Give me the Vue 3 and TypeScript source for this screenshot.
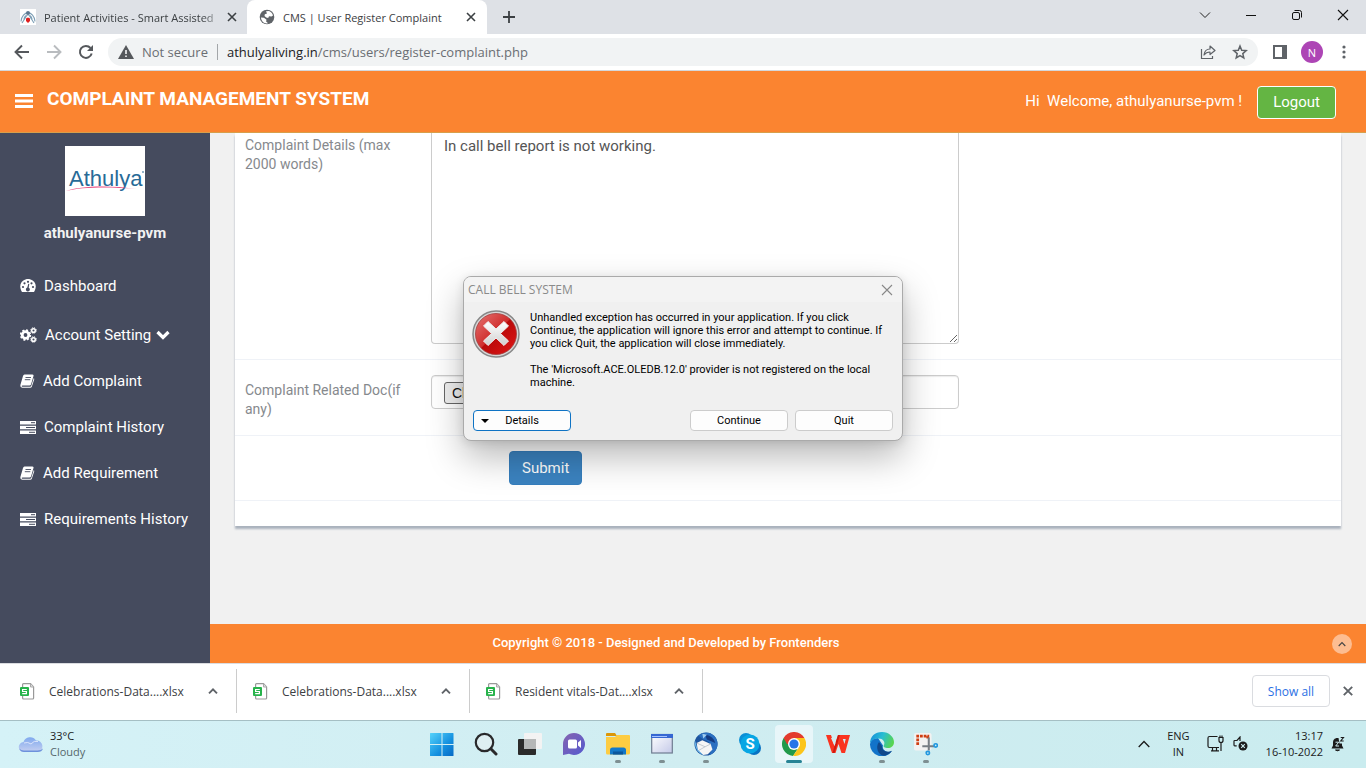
<script setup lang="ts">
import { ref } from 'vue'

type NavIcon = 'gauge' | 'cogs' | 'book' | 'tasks'
interface NavItem { label: string; icon: NavIcon; expandable?: boolean }

const navItems: NavItem[] = [
  { label: 'Dashboard', icon: 'gauge' },
  { label: 'Account Setting', icon: 'cogs', expandable: true },
  { label: 'Add Complaint', icon: 'book' },
  { label: 'Complaint History', icon: 'tasks' },
  { label: 'Add Requirement', icon: 'book' },
  { label: 'Requirements History', icon: 'tasks' },
]

const downloads: string[] = [
  'Celebrations-Data....xlsx',
  'Celebrations-Data....xlsx',
  'Resident vitals-Dat....xlsx',
]

const details = ref('In call bell report is not working.')
</script>

<template>
  <div class="screen">
    <header class="tabs">
      <div class="tab idle">
        <svg class="fav" width="16" height="16" viewBox="0 0 16 16" aria-hidden="true">
          <rect width="16" height="16" fill="#fff" />
          <path d="M1 12.500C2 1 14 1 15 12.500M3.800 12C4 4 12 4 12.200 12M2 14l4.500-7M14 14L9.500 7" fill="none" stroke="#7d9fb6" stroke-width="1.100" />
          <circle cx="8" cy="4" r="2" fill="#5c7890" />
          <path d="M6 9.500l2-1 2 1v2.500l-2 2-2-2z" fill="#e02020" />
        </svg>
        <span class="tab-text fade">Patient Activities - Smart Assisted</span>
        <button class="icon-btn" aria-label="Close tab"><svg width="10" height="10" viewBox="0 0 10 10"><path d="M1 1l8 8M9 1l-8 8" stroke="#3c4043" stroke-width="1.600" /></svg></button>
      </div>
      <div class="tab active">
        <svg class="fav" width="16" height="16" viewBox="0 0 16 16" aria-hidden="true">
          <circle cx="8" cy="8" r="7.300" fill="#5f6368" />
          <path d="M2 8.500l3 .2 2.500 2-.4 1.800 2 1.800c-4 .6-7-2-7.100-5.800zM7 2.200l3-.3c2 .8 3.500 2.300 4 4.500l-1.500 1-2.500-.2-.8 1.800-2-.6L5.500 7l.3-1.800L8 4.500z" fill="#fff" />
        </svg>
        <span class="tab-text">CMS | User Register Complaint</span>
        <button class="icon-btn" aria-label="Close tab"><svg width="10" height="10" viewBox="0 0 10 10"><path d="M1 1l8 8M9 1l-8 8" stroke="#3c4043" stroke-width="1.600" /></svg></button>
      </div>
      <button class="icon-btn new-tab" aria-label="New tab"><svg width="12" height="12" viewBox="0 0 12 12"><path d="M6 0v12M0 6h12" stroke="#3c4043" stroke-width="1.800" /></svg></button>
      <div class="win-controls">
        <button class="icon-btn" aria-label="Search tabs"><svg width="12" height="12" viewBox="0 0 12 12"><path d="M1 3.500l5 5 5-5" fill="none" stroke="#222" /></svg></button>
        <button class="icon-btn" aria-label="Minimize"><svg width="12" height="12" viewBox="0 0 12 12"><path d="M1 6.500h10" stroke="#111" /></svg></button>
        <button class="icon-btn" aria-label="Restore"><svg width="12" height="12" viewBox="0 0 12 12"><rect x="1.500" y="3.500" width="7" height="7" rx="1.500" fill="none" stroke="#111" /><path d="M3.500 1.500h5q2 0 2 2v5" fill="none" stroke="#111" /></svg></button>
        <button class="icon-btn" aria-label="Close"><svg width="12" height="12" viewBox="0 0 12 12"><path d="M1 1l10 10M11 1L1 11" stroke="#111" stroke-width="1.100" /></svg></button>
      </div>
    </header>

    <div class="toolbar">
      <button class="icon-btn tool" aria-label="Back"><svg width="16" height="16" viewBox="0 0 16 16"><path d="M15 8H2M8 1.500L1.500 8 8 14.500" fill="none" stroke="#55585c" stroke-width="1.900" /></svg></button>
      <button class="icon-btn tool" aria-label="Forward"><svg width="16" height="16" viewBox="0 0 16 16"><path d="M1 8h13M8 1.500L14.500 8 8 14.500" fill="none" stroke="#b9bcbf" stroke-width="1.900" /></svg></button>
      <button class="icon-btn tool" aria-label="Reload"><svg width="16" height="16" viewBox="0 0 16 16"><path d="M13.700 9.500A6 6 0 1 1 12.500 4" fill="none" stroke="#55585c" stroke-width="2" /><path d="M15 1v6H9z" fill="#55585c" /></svg></button>
      <div class="omnibox">
        <svg width="16" height="14" viewBox="0 0 16 14" aria-hidden="true"><path d="M8 0l8 14H0z" fill="#55585c" /><path d="M8 5v4M8 10.500v1.500" stroke="#fff" stroke-width="1.500" /></svg>
        <span class="muted secure">Not secure</span>
        <span class="url-rule"></span>
        <span class="url">athulyaliving.in<span class="muted">/cms/users/register-complaint.php</span></span>
        <button class="icon-btn" aria-label="Share"><svg width="16" height="16" viewBox="0 0 16 16"><path d="M1.500 5v9.500h11V12" fill="none" stroke="#5f6368" stroke-width="1.200" /><path d="M4 11c.5-4 3-6 6-6V2l5 4.500-5 4V8C7.500 8 5.500 9 4 11z" fill="none" stroke="#5f6368" stroke-width="1.200" stroke-linejoin="round" /></svg></button>
        <button class="icon-btn star" aria-label="Bookmark"><svg width="16" height="16" viewBox="0 0 16 16"><path d="M8 2l1.700 4.200 4.500.4-3.400 3 1 4.400L8 11.600 4.200 14l1-4.400-3.400-3 4.500-.4z" fill="none" stroke="#5f6368" stroke-width="1.500" /></svg></button>
      </div>
      <button class="icon-btn side" aria-label="Side panel"><svg width="14" height="14" viewBox="0 0 14 14"><path d="M0 0h14v14H0zM2 2v10h7V2z" fill="#5f6368" fill-rule="evenodd" /></svg></button>
      <button class="avatar-btn" aria-label="Profile N">N</button>
      <button class="icon-btn dots" aria-label="Menu"><svg width="4" height="14" viewBox="0 0 4 14"><circle cx="2" cy="2" r="1.600" fill="#5f6368" /><circle cx="2" cy="7" r="1.600" fill="#5f6368" /><circle cx="2" cy="12" r="1.600" fill="#5f6368" /></svg></button>
    </div>

    <div class="app-head">
      <button class="icon-btn" aria-label="Toggle menu"><svg width="18" height="14" viewBox="0 0 18 14"><path d="M0 1.500h18M0 7h18M0 12.500h18" stroke="#fff" stroke-width="3" /></svg></button>
      <a href="#" class="brand">COMPLAINT MANAGEMENT SYSTEM</a>
      <span class="welcome">Hi&nbsp; Welcome, athulyanurse-pvm !</span>
      <a href="#" class="logout">Logout</a>
    </div>

    <div class="app-body">
      <aside class="sidebar">
        <svg class="logo" width="80" height="70" viewBox="0 0 80 70" role="img" aria-label="Athulya">
          <rect width="80" height="70" fill="#fff" />
          <text x="4" y="40" font-family="Liberation Sans, Arial, sans-serif" font-size="22" fill="#286a97">Athulya</text>
          <path d="M1 45c14-5 42-6 71-2-28-2.500-56-2-71 2z" fill="#e8447c" />
          <path d="M77 26h2" stroke="#286a97" />
        </svg>
        <h5 class="user">athulyanurse-pvm</h5>
        <nav class="nav">
          <a v-for="item in navItems" :key="item.label" href="#" class="nav-link" :class="item.icon">
            <svg v-if="item.icon === 'gauge'" width="16" height="14" viewBox="0 0 16 14" aria-hidden="true">
              <path d="M2 13C-3 4 4 0 8 0s11 4 6 13z" fill="#fff" />
              <g fill="#454b5e"><circle cx="3" cy="8" r="1.100" /><circle cx="4.500" cy="4.300" r="1.100" /><circle cx="8" cy="2.800" r="1.100" /><circle cx="11.500" cy="4.300" r="1.100" /><circle cx="13" cy="8" r="1.100" /><path d="M8.300 4.800l1 .3-.6 3.600a2 2 0 1 1-1.400-.1z" /></g>
            </svg>
            <svg v-else-if="item.icon === 'cogs'" width="17" height="16" viewBox="0 0 17 16" aria-hidden="true">
              <circle cx="5.500" cy="8" r="3.300" fill="none" stroke="#fff" stroke-width="2.800" />
              <circle cx="5.500" cy="8" r="4.900" fill="none" stroke="#fff" stroke-width="1.600" stroke-dasharray="2 1.850" />
              <circle cx="13.500" cy="3.500" r="1.800" fill="none" stroke="#fff" stroke-width="1.500" />
              <circle cx="13.500" cy="3.500" r="2.800" fill="none" stroke="#fff" stroke-dasharray="1.200 1" />
              <circle cx="13.500" cy="12.500" r="1.800" fill="none" stroke="#fff" stroke-width="1.500" />
              <circle cx="13.500" cy="12.500" r="2.800" fill="none" stroke="#fff" stroke-dasharray="1.200 1" />
            </svg>
            <svg v-else-if="item.icon === 'book'" width="15" height="14" viewBox="0 0 15 14" aria-hidden="true">
              <path d="M4.500.5h8q1.500 0 1 1.500L11 10.500q-.3 1-1.500 1H2.500q-1 .1-.8.8.2.500 1 .5h7.300q1 0 1.300-1L13.800 4q.7.500.4 1.500l-2.300 7q-.4 1.300-1.800 1.300H2.300Q0 13.500.3 11.300L3 2Q3.400.5 4.500.5z" fill="#fff" />
              <path d="M5.500 3.500h5.500M4.800 5.700h5.500" stroke="#454b5e" stroke-width=".9" />
            </svg>
            <svg v-else width="16" height="13" viewBox="0 0 16 13" aria-hidden="true">
              <path d="M0 0h16v3.400H0zM0 4.800h16v3.400H0zM0 9.600h16V13H0z" fill="#fff" />
              <path d="M11 1.700h4M6 6.500h9M9 11.300h6" stroke="#454b5e" />
            </svg>
            <span>{{ item.label }}</span>
            <svg v-if="item.expandable" class="caret" width="14" height="10" viewBox="0 0 14 10" aria-hidden="true"><path d="M1.500 2L7 7.500 12.500 2" fill="none" stroke="#fff" stroke-width="3.200" /></svg>
          </a>
        </nav>
      </aside>

      <div class="content">
        <main class="main">
          <form class="panel" @submit.prevent>
            <div class="row first">
              <label for="details" class="label">Complaint Details (max 2000 words)</label>
              <div class="cell"><textarea id="details" v-model="details" class="control area"></textarea></div>
            </div>
            <div class="row second">
              <label for="doc" class="label">Complaint Related Doc(if any)</label>
              <div class="cell"><input id="doc" type="file" class="control file" /></div>
            </div>
            <div class="row third">
              <button type="submit" class="submit">Submit</button>
            </div>
          </form>
        </main>
        <footer class="foot">
          <span class="copy">Copyright © 2018 - Designed and Developed by Frontenders</span>
          <a href="#" class="to-top" aria-label="Back to top"><svg width="8" height="6" viewBox="0 0 8 6"><path d="M.7 5L4 1.500 7.300 5" fill="none" stroke="#444" stroke-width="1.100" /></svg></a>
        </footer>
      </div>
    </div>

    <div class="downloads">
      <div v-for="(name, i) in downloads" :key="i" class="download">
        <svg width="16" height="17" viewBox="0 0 16 17" aria-hidden="true">
          <path d="M3.500.6h7L13.600 4v11q0 1-1 1h-9q-1 0-1-1V1.600q0-1 .9-1z" fill="#fff" stroke="#999" stroke-width="1.200" /><path d="M10.500.8V4h3" fill="#ddd" stroke="#aaa" />
          <rect y="4" width="9" height="9" rx="1" fill="#27b34b" /><path d="M6.800 6.500H2.600v2h3.800v2.200H2.200" fill="none" stroke="#fff" stroke-width="1.200" />
        </svg>
        <span class="file-name">{{ name }}</span>
        <button class="icon-btn" aria-label="Download options"><svg width="10" height="8" viewBox="0 0 10 8"><path d="M1 6.300L5 2.300l4 4" fill="none" stroke="#5f6368" stroke-width="1.900" /></svg></button>
      </div>
      <button class="show-all">Show all</button>
      <button class="icon-btn close-dl" aria-label="Close downloads"><svg width="10" height="10" viewBox="0 0 10 10"><path d="M.8.8l8.400 8.400M9.200.8L.8 9.200" stroke="#5f6368" stroke-width="1.900" /></svg></button>
    </div>

    <div class="taskbar">
      <div class="weather">
        <svg width="26" height="18" viewBox="0 0 26 18" aria-hidden="true">
          <defs><linearGradient id="cloud" x1="0" y1="0" x2="0" y2="1"><stop offset="0" stop-color="#80a9ee" /><stop offset="1" stop-color="#c6d0f1" /></linearGradient></defs>
          <path d="M6 17a5 5 0 0 1-.5-10A7 7 0 0 1 18 5.500 5.800 5.800 0 0 1 19.500 17z" fill="url(#cloud)" /><path d="M1.200 13.500Q2.500 17 6 17h13.500q4.500 0 5.500-3.500-2 2-5.500 2H6q-3 0-4.800-2z" fill="#6d91dc" />
          <path d="M6 8q4-1.500 7 1M13 9q3-4 7-2.500" fill="none" stroke="#dbe4fb" />
        </svg>
        <div class="weather-text"><span>33°C</span><span class="sub">Cloudy</span></div>
      </div>

      <div class="apps">
        <button class="app" aria-label="Start"><svg width="24" height="24" viewBox="0 0 24 24"><defs><linearGradient id="win" x1="0" y1="0" x2="1" y2="1"><stop offset="0" stop-color="#55d3fb" /><stop offset=".6" stop-color="#1490df" /><stop offset="1" stop-color="#0669c5" /></linearGradient></defs><path d="M0 1.500Q0 1 .5 1H11.500v11H0zM12.500 1H23q.5 0 .5.500V12h-11zM0 13h11.500v11H.5Q0 24 0 23.500zM12.500 13h11v10.500q0 .5-.5.500H12.500z" fill="url(#win)" /></svg></button>
        <button class="app" aria-label="Search"><svg width="24" height="24" viewBox="0 0 24 24"><circle cx="10.500" cy="10.500" r="8.700" fill="#dfeff2" stroke="#29292b" stroke-width="2.200" /><path d="M16.800 16.800l5.200 5.200" stroke="#29292b" stroke-width="3" stroke-linecap="round" /></svg></button>
        <button class="app" aria-label="Task view"><svg width="24" height="24" viewBox="0 0 24 24"><rect x="0" y="7" width="18" height="16" rx="1" fill="#2b2b2b" /><rect x="6" y="1" width="18" height="16" rx="1" fill="#f3f3f3" /><path d="M6 7h12v10H6z" fill="#b5b7b7" /></svg></button>
        <button class="app" aria-label="Chat"><svg width="24" height="24" viewBox="0 0 24 24"><defs><linearGradient id="chat" x1="0" y1="0" x2="1" y2="1"><stop offset="0" stop-color="#8664b0" /><stop offset="1" stop-color="#5459cf" /></linearGradient></defs><path d="M12 1a11 11 0 1 1-5 20.800L1 23V12A11 11 0 0 1 12 1z" fill="url(#chat)" /><rect x="6" y="7.500" width="9" height="9" rx="1.500" fill="#fff" /><path d="M16 10.500L19 8v8l-3-2.500z" fill="#fff" /></svg></button>
        <button class="app open" aria-label="File Explorer"><svg width="24" height="24" viewBox="0 0 24 24"><path d="M0 2q0-1 1-1h8l2 3H0z" fill="#dc9708" /><path d="M0 5h9l2-2h12q1 0 1 1v17q0 1.500-1.500 1.500h-21Q0 22.500 0 21z" fill="#fdcc42" /><path d="M4 22.500V18q0-2.500 2.500-2.500h11Q20 15.500 20 18v4.500z" fill="#1479c9" /><path d="M7 19.500h10v3H7z" fill="#0b579d" /></svg></button>
        <button class="app open" aria-label="Application window"><svg width="24" height="24" viewBox="0 0 24 24"><defs><linearGradient id="wnd" x1="0" y1="0" x2="1" y2="1"><stop offset="0" stop-color="#fff" /><stop offset="1" stop-color="#c4c9e8" /></linearGradient></defs><rect x="1.700" y="2.500" width="20.600" height="18.500" fill="url(#wnd)" stroke="#6e7c91" stroke-width="1.200" /><rect x="1" y="2" width="22" height="4" fill="#3667d2" /><path d="M2 4.500h15" stroke="#a7c4ff" /></svg></button>
        <button class="app open" aria-label="Thunderbird"><svg width="24" height="24" viewBox="0 0 26 26"><circle cx="13" cy="13" r="12.500" fill="#1e559f" /><path d="M5 4C11-1 20 0 24 7c4 9-1 15-7 18 3-9 2-15-7-17z" fill="#2a6fc0" /><path d="M12 3c5 0 10 4 11 9l-9-4z" fill="#143b83" /><path d="M3 12l6-3 9 4 2 6-5 5-5 1-6-5z" fill="#f5f5f5" /><path d="M3 12l9 4 6-3M5 20l7-4" fill="none" stroke="#bec5cd" /><path d="M1 9c-1 7 3 14 9 16l-6-6z" fill="#69b6e9" /><path d="M9 2l5 1-4 4z" fill="#9fcdf0" /></svg></button>
        <button class="app" aria-label="Skype"><svg width="24" height="24" viewBox="0 0 24 24"><circle cx="8" cy="8" r="7" fill="#0b8fd6" /><circle cx="16" cy="16" r="7" fill="#0873c3" /><circle cx="12" cy="12" r="9.500" fill="#08a6e4" /><text x="12" y="17" text-anchor="middle" font-family="Roboto, sans-serif" font-size="15" font-weight="700" fill="#fff">S</text></svg></button>
        <button class="app current open" aria-label="Chrome"><svg width="24" height="24" viewBox="0 0 24 24"><path d="M12 12h-1L1.600 6A12 12 0 0 0 11 24l6-9z" fill="#229a4b" /><path d="M12 6h10.400A12 12 0 0 1 11 24l6.200-9z" fill="#fcc51b" /><path d="M12 12H5L1.600 6A12 12 0 0 1 22.400 6H12z" fill="#e33b2e" /><circle cx="12" cy="12" r="6" fill="#fff" /><circle cx="12" cy="12" r="4.600" fill="#2674e8" /></svg></button>
        <button class="app" aria-label="WPS Office"><svg width="24" height="24" viewBox="0 0 24 24"><path d="M0 3h5l3.500 11L12 3h3.500l3 9 1.200-5H16l-1.200-4H24l-5 18h-3.500L12.500 12l-3 9H6z" fill="#fa3420" /><path d="M8.500 14L12 3h2l-5.500 18H6.500z" fill="#cf1a10" /><path d="M5 6h3l1.500 5-1 3z" fill="#d0edf1" /></svg></button>
        <button class="app open" aria-label="Edge"><svg width="24" height="24" viewBox="0 0 24 24"><defs><linearGradient id="edge" x1="0" y1=".2" x2="1" y2=".5"><stop offset="0" stop-color="#168fdb" /><stop offset=".5" stop-color="#29bed2" /><stop offset="1" stop-color="#58d550" /></linearGradient></defs><path d="M0 12a12 12 0 0 0 22 7q-3 1.500-6 .5-4-2-3-6L8 6Q1 6 0 12z" fill="#1273c9" /><path d="M9 10c-4 5-1 13 5 13.800 3.500-.6 6.500-2.500 8-5-5 2-10 .5-10-4.800z" fill="#10488b" /><path d="M0 12C0 4 5 0 12 0s12 5 12 10c0 4-3 6-6 6s-5.500-1-4-3c1.500-3-1-6.500-5.500-6.500S1 8.500 0 12z" fill="url(#edge)" /></svg></button>
        <button class="app open" aria-label="Snipping Tool"><svg width="24" height="24" viewBox="0 0 26 26"><rect x="0" y="1" width="19" height="19" rx="2" fill="#f3f2f1" /><path d="M4 14V4.500h11V8" fill="none" stroke="#cf3e12" stroke-width="3" stroke-dasharray="3 1" /><path d="M16 6v14M9 15.500h13" stroke="#777d83" stroke-width="2.200" /><circle cx="23.500" cy="14.500" r="1.800" fill="none" stroke="#2398df" stroke-width="1.800" /><circle cx="15" cy="22.800" r="1.800" fill="none" stroke="#2398df" stroke-width="1.800" /></svg></button>
      </div>

      <div class="tray">
        <button class="icon-btn" aria-label="Show hidden icons"><svg width="12" height="8" viewBox="0 0 12 8"><path d="M.7 7L6 1.500 11.300 7" fill="none" stroke="#1b1b1b" stroke-width="1.300" /></svg></button>
        <div class="lang"><span>ENG</span><span>IN</span></div>
        <svg class="net" width="17" height="17" viewBox="0 0 17 17" aria-hidden="true"><path d="M10.500 1.500H2.500q-1.500 0-1.500 1.500V11q0 1.500 1.500 1.500h9.500M5.500 12.500v3M9.500 12.500v3M4 15.800h8M14 7.500v8.500" fill="none" stroke="#1b1b1b" stroke-width="1.200" /><path d="M12 2.500h4v3q0 2-2 2t-2-2zM13 .5v2M15 .5v2" fill="none" stroke="#1b1b1b" stroke-width="1.200" /></svg>
        <svg class="sound" width="15" height="15" viewBox="0 0 15 15" aria-hidden="true"><path d="M7 5V1L4 4.500H1.700Q1 4.500 1 5.300V9q0 .8.700.8h2" fill="none" stroke="#1b1b1b" stroke-width="1.200" /><circle cx="10" cy="10" r="4.500" fill="#1b1b1b" /><path d="M8.200 8.200l3.600 3.600M11.800 8.200l-3.600 3.600" stroke="#d0edf1" stroke-width="1.100" /></svg>
        <div class="clock"><span>13:17</span><span>16-10-2022</span></div>
        <svg width="14" height="16" viewBox="0 0 14 16" aria-hidden="true"><path d="M7.500 2C3.500 1.500 2 4 2 6.500V9.500L.5 12.500h12L11 9.500V7.500H8.500z" fill="#1b1b1b" /><path d="M4.500 14q2 1.500 4 0z" fill="#1b1b1b" stroke="#1b1b1b" /><path d="M4.500 6.200h3.200L4.700 10H8" fill="none" stroke="#d0edf1" /><path d="M9.700 1.500h2.800L9.700 5h3" fill="none" stroke="#1b1b1b" stroke-width="1.100" /></svg>
      </div>
    </div>

    <section class="dialog" role="dialog" aria-labelledby="dlg-title">
      <div class="dlg-bar">
        <span id="dlg-title">CALL BELL SYSTEM</span>
        <button class="icon-btn" aria-label="Close dialog"><svg width="12" height="12" viewBox="0 0 12 12"><path d="M1 1l10 10M11 1L1 11" stroke="#888" stroke-width="1.100" /></svg></button>
      </div>
      <div class="dlg-main">
        <svg width="48" height="48" viewBox="0 0 48 48" aria-hidden="true">
          <defs>
            <linearGradient id="red" x1="0" y1="0" x2="1" y2="1"><stop offset="0" stop-color="#e77673" /><stop offset=".48" stop-color="#cf2d2d" /><stop offset=".5" stop-color="#b90a0a" /><stop offset="1" stop-color="#e11717" /></linearGradient>
            <linearGradient id="cross" x1="0" y1="0" x2="0" y2="1"><stop offset="0" stop-color="#fff" /><stop offset="1" stop-color="#d0d0d0" /></linearGradient>
          </defs>
          <circle cx="24" cy="24" r="23" fill="#d7d7d7" stroke="#888" stroke-width="1.500" /><circle cx="24" cy="24" r="20.500" fill="url(#red)" stroke="#a43b3b" stroke-width=".8" />
          <path d="M16 11.500l8 7.500 8-7.500 4.500 4.500-8 7.500 8 7.500-4.500 4.500-8-7.500-8 7.500-4.500-4.500 8-7.500-8-7.500z" fill="url(#cross)" stroke="#eee" stroke-linejoin="round" />
        </svg>
        <div class="dlg-text">
          <p>Unhandled exception has occurred in your application. If you click<br />Continue, the application will ignore this error and attempt to continue. If<br />you click Quit, the application will close immediately.</p>
          <p>The 'Microsoft.ACE.OLEDB.12.0' provider is not registered on the local<br />machine.</p>
        </div>
      </div>
      <div class="dlg-actions">
        <button class="dlg-btn details"><svg width="8" height="4" viewBox="0 0 8 4" aria-hidden="true"><path d="M0 0h8L4 4z" fill="#000" /></svg><span>Details</span></button>
        <button class="dlg-btn">Continue</button>
        <button class="dlg-btn">Quit</button>
      </div>
    </section>
  </div>
</template>

<style>
html, body { margin: 0; }
</style>

<style scoped>
* { box-sizing: border-box; }
.screen { position: relative; display: flex; flex-direction: column; height: 100vh; overflow: hidden; font-family: "Open Sans", "Noto Sans", sans-serif; font-size: 12px; color: #3c4043; background: #fff; }
svg { display: block; flex: none; }
button { font-family: inherit; cursor: pointer; }
a { text-decoration: none; }
.icon-btn { display: grid; place-items: center; border: 0; padding: 0; background: none; }

.tabs { display: flex; flex: none; height: 34px; background: #dee1e6; font-size: 11px; }
.tab { display: flex; align-items: center; white-space: nowrap; }
.tab .icon-btn { width: 16px; height: 16px; }
.idle { width: 247px; padding: 0 7px 0 20px; }
.active { width: 240px; padding: 0 8px 0 12px; background: #fff; border-radius: 8px 8px 0 0; }
.tab-text { flex: 1; margin-left: 8px; }
.fade { -webkit-mask-image: linear-gradient(90deg, #000 88%, transparent); mask-image: linear-gradient(90deg, #000 88%, transparent); }
.new-tab { width: 44px; }
.win-controls { display: flex; margin-left: auto; height: 29px; }
.win-controls .icon-btn { width: 46px; }

.toolbar { display: flex; align-items: center; flex: none; height: 37px; padding: 0 12px 0 6px; border-bottom: 1px solid #d5d7da; font-size: 13px; }
.tool { width: 32px; height: 28px; }
.omnibox { display: flex; align-items: center; flex: 1; height: 28px; margin-left: 6px; padding: 0 10px; border-radius: 14px; background: #f1f3f4; }
.muted { color: #6a6e73; }
.secure { margin-left: 8px; }
.url-rule { width: 1px; height: 16px; margin: 0 9px; background: #a3a6a9; }
.url { flex: 1; color: #202124; }
.star { margin-left: 16px; }
.side { margin-left: 15px; }
.avatar-btn { width: 22px; height: 22px; margin-left: 14px; padding: 0; border: 0; border-radius: 50%; background: #ad45b5; color: #fff; font-size: 11px; }
.dots { width: 20px; margin-left: 11px; }

.app-head { display: flex; align-items: center; flex: none; height: 62px; padding: 0 30px 2px 15px; background: #fb8430; border-bottom: 1px solid #d79f4b; font-family: Roboto, sans-serif; color: #fff; }
.brand { margin: -4px 0 0 14px; color: #fff; font-size: 19px; font-weight: 700; }
.welcome { margin-left: auto; font-size: 15px; }
.logout { margin: 4px 0 0 15px; padding: 0 15px; border: 1px solid #fff; border-radius: 4px; background: #64b543; color: #fff; font-size: 15px; line-height: 31px; }

.app-body { display: flex; flex: 1; min-height: 0; font-family: Roboto, sans-serif; }
.sidebar { display: flex; flex-direction: column; flex: none; width: 210px; padding-top: 13px; background: #454b5e; color: #fff; }
.logo { align-self: center; }
.user { margin: 8px 0 21px; text-align: center; font-size: 15px; line-height: 18px; font-weight: 700; color: #f2f2f2; }
.nav-link { display: flex; align-items: center; height: 46px; padding-left: 20px; color: #fff; font-size: 15px; }
.nav-link span { margin-left: 8px; }
.nav-link .caret { margin-left: 5px; }
.gauge { margin-bottom: 3px; }

.content { display: flex; flex-direction: column; flex: 1; min-width: 0; background: #f1f1f1; }
.main { flex: 1; min-height: 0; padding: 0 25px; }
.panel { overflow: hidden; padding-bottom: 25px; background: #fff; box-shadow: 0 3px 2px #aab2bd; }
.row { display: grid; grid-template-columns: 2fr 6fr 4fr; margin: 0 -5px; padding-bottom: 15px; border-bottom: 1px solid #eff2f7; }
.second, .third { padding-top: 15px; }
.third { display: block; }
.label { padding: 3px 15px 0; font-size: 14px; line-height: 19px; color: #86898d; }
.second .label { padding-top: 6px; }
.second { padding-bottom: 16px; }
.cell { padding: 0 15px; }
.control { display: block; width: 100%; margin: 0; border: 1px solid #ccc; border-radius: 4px; background: #fff; color: #555; outline: 0; }
.area { height: 211px; padding: 3px 12px; border-top: 0; border-radius: 0 0 4px 4px; font-family: Roboto, sans-serif; font-size: 15px; line-height: 20px; }
.file { height: 34px; padding: 6px 12px; font-family: "Liberation Sans", Arial, sans-serif; font-size: 14px; line-height: 20px; box-shadow: inset 0 1px 1px #ececec; }
.file::file-selector-button { height: 22px; padding: 0 7px; border: 1px solid #666; border-radius: 3px; background: #efefef; color: #111; font: inherit; }
.submit { display: block; height: 34px; margin-left: 25%; padding: 0 12px; border: 1px solid #357ebd; border-radius: 4px; background: #3b83c0; color: #fff; font-family: Roboto, sans-serif; font-size: 15px; }

.foot { display: flex; align-items: center; flex: none; height: 39px; padding-right: 14px; background: #fb8430; color: #fff; }
.copy { flex: 1; padding: 0 210px 2px 0; text-align: center; font-size: 13px; font-weight: 500; }
.to-top { display: grid; place-items: center; width: 20px; height: 20px; border-radius: 50%; background: #fdbd91; }

.downloads { display: flex; align-items: center; flex: none; height: 57px; padding: 0 10px 2px 0; border-top: 1px solid #dadce0; background: #fff; }
.download { display: flex; align-items: center; width: 233px; height: 44px; padding: 0 16px; border-right: 1px solid #ccc; }
.download:first-child { width: 237px; padding-left: 20px; }
.file-name { flex: 1; margin-left: 13px; white-space: nowrap; }
.download .icon-btn { width: 14px; height: 14px; }
.show-all { width: 78px; height: 32px; margin-left: auto; border: 1px solid #dadce0; border-radius: 4px; background: #fff; color: #2b70e4; font-size: 12px; font-weight: 500; padding: 0; }
.close-dl { width: 16px; height: 16px; margin-left: 10px; }

.taskbar { display: grid; grid-template-columns: 1fr auto 1fr; flex: none; height: 48px; padding-bottom: 2px; border-top: 1px solid #a5bfc4; background: linear-gradient(90deg, #d5f2f7, #d0edf1 50%, #caecef); color: #1b1b1b; font-size: 11px; line-height: 16px; }
.weather { display: flex; align-items: center; padding-left: 18px; }
.weather-text, .lang, .clock { display: flex; flex-direction: column; }
.weather-text { margin-left: 6px; }
.sub { color: #55676b; }
.apps { display: flex; align-items: center; gap: 6px; padding-left: 2px; }
.app { position: relative; display: grid; place-items: center; width: 38px; height: 38px; padding: 0; border: 0; border-radius: 4px; background: none; }
.current { background: #e8f6f9; }
.open::after { content: ""; position: absolute; bottom: 0; left: 50%; width: 6px; height: 3px; margin-left: -3px; border-radius: 2px; background: #7e8f92; }
.current::after { width: 16px; margin-left: -8px; background: #268395; }
.tray { display: flex; align-items: center; justify-content: flex-end; padding-right: 21px; }
.lang { align-items: center; margin: 0 17px; }
.sound { margin-left: 9px; }
.clock { align-items: flex-end; margin: 0 8px 0 18px; }

.dialog { position: absolute; top: 276px; left: 50%; width: 440px; margin-left: -220px; padding-bottom: 9px; border: 1px solid #aaa; border-radius: 8px; background: #f0f0f0; box-shadow: 0 16px 36px rgba(0, 0, 0, .28), 0 2px 10px rgba(0, 0, 0, .1); overflow: hidden; color: #000; font-family: Roboto, "Liberation Sans", sans-serif; font-size: 11px; line-height: 13px; }
.dlg-bar { display: flex; align-items: center; justify-content: space-between; height: 25px; padding: 0 9px 0 4px; background: #f3f3f3; color: #8a8a8a; font-family: "Open Sans", "Noto Sans", sans-serif; font-size: 12px; }
.dlg-main { display: flex; gap: 10px; padding: 8px 8px 0; }
.dlg-text { padding-top: 1px; white-space: nowrap; }
.dlg-text p { margin: 0 0 13px; }
.dlg-actions { display: flex; gap: 7px; padding: 8px 9px 0; }
.dlg-btn { width: 98px; height: 21px; padding: 0; border: 1px solid #ccc; border-radius: 4px; background: #fdfdfd; color: #000; font-size: 11px; line-height: 13px; }
.details { display: flex; align-items: center; margin-right: auto; padding-left: 7px; border-color: #0f73c4; }
.details span { flex: 1; padding-right: 15px; text-align: center; }
</style>
